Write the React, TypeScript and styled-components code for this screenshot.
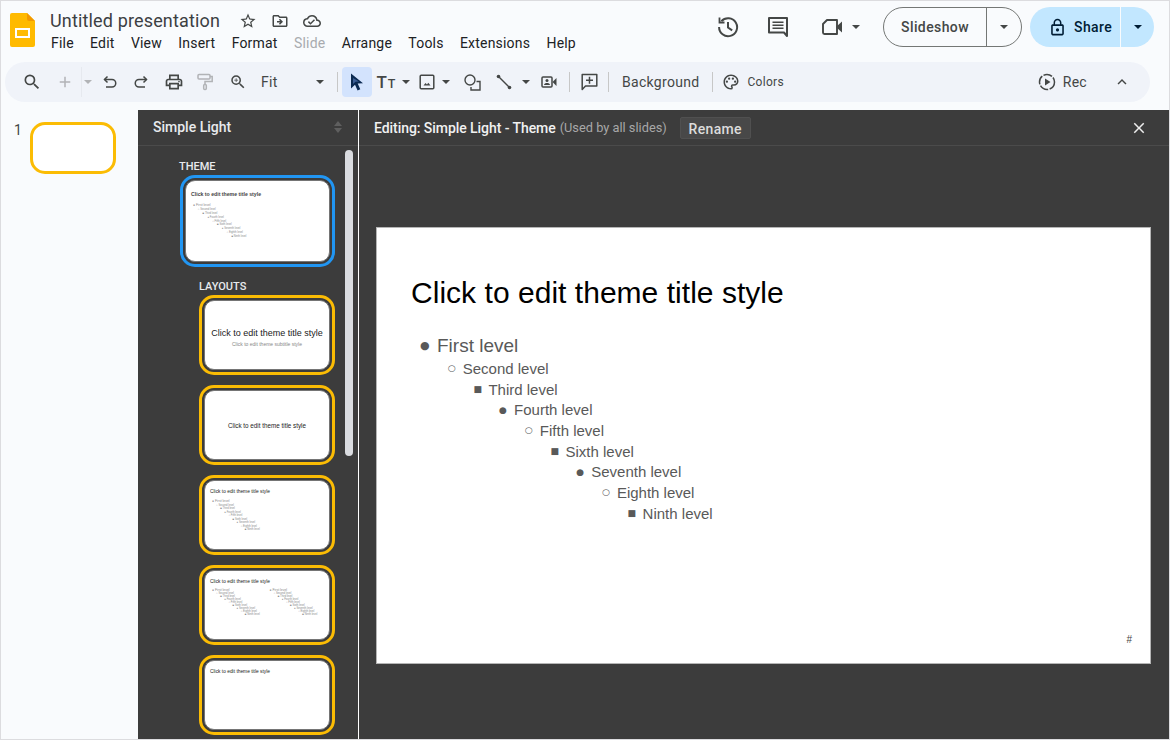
import React from 'react';
import styled, { createGlobalStyle } from 'styled-components';
import {
  MdOutlineStarBorder, MdOutlineDriveFileMove, MdOutlineCloudDone, MdSearch, MdAdd,
  MdOutlinePrint, MdOutlineZoomIn, MdOutlinePalette, MdLockOutline, MdExpandLess, MdClose,
} from 'react-icons/md';

const GlobalStyle = createGlobalStyle`
  * { box-sizing: border-box; }
  html, body { margin: 0; padding: 0; background: #f9fbfd; overflow: hidden; }
  body { font-family: Roboto, "Liberation Sans", sans-serif; }
`;

const Page = styled.div`
  width: 1170px;
  height: 740px;
  border: 1px solid #dcdcdf;
  background: #f9fbfd;
  display: flex;
  flex-direction: column;
  overflow: hidden;
`;

const Header = styled.header`
  height: 61px;
  flex: none;
  display: flex;
  justify-content: space-between;
  padding: 6px 15px 0 9px;
`;

const TitleBlock = styled.div`
  display: flex;
  gap: 15px;
  padding-top: 6px;
`;

const Names = styled.div`
  display: flex;
  flex-direction: column;
`;

const TitleRow = styled.div`
  display: flex;
  align-items: center;
  height: 25px;
  margin-top: -5px;
  color: #444746;
`;

const DocTitle = styled.span`
  font-size: 18px;
  width: 182px;
  letter-spacing: 0.15px;
  color: #3c4043;
`;

const TitleIcon = styled.span`
  width: 32px;
  display: flex;
  justify-content: center;
  font-size: 18px;
  color: #444746;
`;

const Menu = styled.nav`
  display: flex;
  margin-top: 1px;
  padding-left: 1px;
  gap: 16.3px;
  font-size: 14px;
  line-height: 18px;
  letter-spacing: 0.2px;
`;

const MenuItem = styled.span<{ $disabled?: boolean }>`
  color: ${(p) => (p.$disabled ? '#a8abaf' : '#202124')};
`;

const Actions = styled.div`
  display: flex;
  align-items: center;
  height: 40px;
`;

const ActionIcon = styled.span<{ $w: number; $ml?: number }>`
  width: ${(p) => p.$w}px;
  margin-left: ${(p) => p.$ml ?? 0}px;
  display: flex;
  justify-content: center;
`;

const Caret = styled.span<{ $color?: string; $w?: number }>`
  width: ${(p) => p.$w ?? 12}px;
  flex: none;
  display: flex;
  justify-content: center;
  &::after {
    content: '';
    border-left: 4px solid transparent;
    border-right: 4px solid transparent;
    border-top: 4px solid ${(p) => p.$color ?? '#444746'};
  }
`;

const SplitButton = styled.div<{ $w: number; $share?: boolean }>`
  width: ${(p) => p.$w}px;
  height: 40px;
  margin-left: ${(p) => (p.$share ? 8 : 22)}px;
  border-radius: 20px;
  border: ${(p) => (p.$share ? 'none' : '1px solid #747775')};
  background: ${(p) => (p.$share ? '#c2e7ff' : 'transparent')};
  display: flex;
  align-items: center;
  font-size: 14px;
  font-weight: 500;
  letter-spacing: 0.4px;
  color: ${(p) => (p.$share ? '#001d35' : '#444746')};
`;

const SplitMain = styled.span<{ $w: number; $share?: boolean }>`
  width: ${(p) => p.$w}px;
  height: 100%;
  display: flex;
  align-items: center;
  justify-content: ${(p) => (p.$share ? 'flex-start' : 'center')};
  padding-left: ${(p) => (p.$share ? 18 : 0)}px;
  gap: 7px;
  border-right: 1px solid ${(p) => (p.$share ? '#f9fbfd' : '#747775')};
  svg { font-size: 19px; }
`;

const Toolbar = styled.div`
  height: 40px;
  flex: none;
  margin: 0 19px 0 4px;
  padding-left: 11px;
  border-radius: 20px;
  background: #f0f3f9;
  display: flex;
  align-items: center;
  color: #444746;
`;

const Tool = styled.span<{ $w: number; $muted?: boolean; $size?: number }>`
  width: ${(p) => p.$w}px;
  height: 30px;
  flex: none;
  display: flex;
  align-items: center;
  justify-content: center;
  font-size: ${(p) => p.$size ?? 18}px;
  color: ${(p) => (p.$muted ? '#b1b3b6' : '#444746')};
`;

const ActiveTool = styled(Tool)`
  background: #d3e3fd;
  border-radius: 4px;
`;

const ZoomSelect = styled.span`
  width: 74px;
  display: flex;
  align-items: center;
  justify-content: space-between;
  padding: 0 4px 0 3px;
  font-size: 14px;
  letter-spacing: 0.3px;
`;

const TextGlyph = styled.span`
  font-size: 17px;
  font-weight: 500;
  small { font-size: 12.5px; font-weight: 500; margin-left: 1px; }
`;

const Divider = styled.span<{ $l: number; $r: number; $faint?: boolean }>`
  width: 1px;
  height: ${(p) => (p.$faint ? 30 : 20)}px;
  flex: none;
  background: ${(p) => (p.$faint ? '#e6e9ef' : '#c7c7c7')};
  margin: 0 ${(p) => p.$r}px 0 ${(p) => p.$l}px;
`;

const ToolText = styled.span<{ $size?: number; $ml?: number; $mr?: number }>`
  font-size: ${(p) => p.$size ?? 14}px;
  margin: 0 ${(p) => p.$mr ?? 0}px 0 ${(p) => p.$ml ?? 0}px;
  letter-spacing: 0.3px;
  color: #444746;
`;

const ToolRight = styled.div`
  margin-left: auto;
  display: flex;
  align-items: center;
`;

const Workspace = styled.div`
  flex: 1;
  min-height: 0;
  margin-top: 8px;
  display: flex;
`;

const Filmstrip = styled.aside`
  width: 137px;
  flex: none;
  display: flex;
  gap: 8px;
  padding: 12px 0 0 13px;
  font-size: 14px;
  color: #444746;
`;

const FilmThumb = styled.div`
  width: 86px;
  height: 52px;
  background: #fff;
  border: 3px solid #fbbc04;
  border-radius: 15px;
`;

const ThemePanel = styled.section`
  width: 221px;
  flex: none;
  position: relative;
  background: #3c3c3c;
  border-right: 1px solid #fff;
  overflow: hidden;
  display: flex;
  flex-direction: column;
`;

const PanelHead = styled.div`
  height: 36px;
  flex: none;
  padding: 0 14px 2px 15px;
  display: flex;
  align-items: center;
  justify-content: space-between;
  border-bottom: 1px solid #4b4b4b;
  font-size: 14px;
  font-weight: 500;
  color: #e8eaed;
`;

const SortArrows = styled.span`
  display: flex;
  flex-direction: column;
  gap: 2px;
  margin-right: 2px;
  &::before, &::after {
    content: '';
    border-left: 4px solid transparent;
    border-right: 4px solid transparent;
  }
  &::before { border-bottom: 5px solid #5f5f5f; }
  &::after { border-top: 5px solid #5f5f5f; }
`;

const ThumbList = styled.div`
  padding: 14px 23px 0 0;
  display: flex;
  flex-direction: column;
  align-items: flex-end;
`;

const SectionLabel = styled.div<{ $w: number }>`
  width: ${(p) => p.$w}px;
  height: 15px;
  font-size: 11px;
  line-height: 14px;
  font-weight: 500;
  color: #e8eaed;
`;

const Thumb = styled.div<{ $w: number; $h: number; $selected?: boolean }>`
  width: ${(p) => p.$w}px;
  height: ${(p) => p.$h}px;
  flex: none;
  margin-bottom: ${(p) => (p.$selected ? 13 : 10)}px;
  border: 3px solid ${(p) => (p.$selected ? '#2196f3' : '#fbbc04')};
  border-radius: 15px;
  padding: 2px;
`;

const ThumbInner = styled.div<{ $center?: boolean; $top?: number }>`
  height: 100%;
  background: #fff;
  border: 1.5px solid #757575;
  border-radius: 10px;
  padding: ${(p) => (p.$center ? '2px 0 0' : `${p.$top ?? 8}px 4px 0 5px`)};
  display: flex;
  flex-direction: column;
  align-items: ${(p) => (p.$center ? 'center' : 'stretch')};
  justify-content: ${(p) => (p.$center ? 'center' : 'flex-start')};
  font-family: "Liberation Sans", Arial, sans-serif;
  overflow: hidden;
  white-space: nowrap;
`;

const MiniTitle = styled.div<{ $size: number; $bold?: boolean }>`
  font-size: ${(p) => p.$size}px;
  line-height: ${(p) => Math.ceil(p.$size + 1)}px;
  color: ${(p) => (p.$bold ? '#444' : '#222')};
  font-weight: ${(p) => (p.$bold ? 700 : 400)};
`;

const MiniSub = styled.div`
  font-size: 5px;
  line-height: 6px;
  margin: 3px 0 -3px;
  color: #888;
`;

const MiniColumns = styled.div<{ $gap: number }>`
  display: flex;
  margin-top: ${(p) => p.$gap}px;
`;

const MiniCol = styled.div`
  width: 63px;
`;

const MiniRow = styled.div<{ $indent: number; $first?: boolean; $h: number }>`
  height: ${(p) => (p.$first ? p.$h + 1 : p.$h)}px;
  padding-left: ${(p) => p.$indent}px;
  font-size: ${(p) => (p.$first ? 3.4 : 2.7)}px;
  line-height: ${(p) => (p.$first ? p.$h + 1 : p.$h)}px;
  color: #888;
`;

const Scrollbar = styled.div`
  position: absolute;
  left: 207px;
  top: 40px;
  width: 8px;
  height: 306px;
  border-radius: 4px;
  background: #dadce0;
`;

const Editor = styled.main`
  flex: 1;
  min-width: 0;
  background: #3c3c3c;
  display: flex;
  flex-direction: column;
`;

const EditorHead = styled.div`
  height: 36px;
  flex: none;
  padding: 0 21px 0 15px;
  display: flex;
  align-items: center;
  border-bottom: 1px solid #4b4b4b;
`;

const EditingText = styled.span`
  font-size: 14px;
  font-weight: 500;
  letter-spacing: -0.06px;
  color: #f1f1f1;
`;

const UsedBy = styled.span`
  margin-left: 4px;
  font-size: 12.8px;
  color: #a8a8a8;
`;

const RenameButton = styled.span`
  width: 71px;
  height: 22px;
  margin-left: 13px;
  padding-top: 2px;
  background: #484848;
  border: 1px solid #505050;
  border-radius: 2px;
  display: flex;
  align-items: center;
  justify-content: center;
  font-size: 14px;
  font-weight: 500;
  letter-spacing: 0.35px;
  color: #dcdcdc;
`;

const CloseButton = styled.span`
  margin-left: auto;
  display: flex;
  font-size: 18px;
  color: #eee;
`;

const Slide = styled.div`
  width: 775px;
  height: 437px;
  margin: 81px 0 0 17px;
  background: #fff;
  border: 1px solid #b5b5b5;
  padding: 47px 18px 18px 34px;
  display: flex;
  flex-direction: column;
  font-family: "Liberation Sans", Arial, sans-serif;
`;

const SlideTitle = styled.h1`
  margin: 0 0 22px;
  font-size: 30px;
  line-height: 36px;
  font-weight: 400;
  letter-spacing: 0.03px;
  color: #000;
`;

const Level = styled.div<{ $indent: number; $first?: boolean }>`
  display: flex;
  padding-left: ${(p) => p.$indent}px;
  height: ${(p) => (p.$first ? 25 : 20.7)}px;
  align-items: center;
  font-size: ${(p) => (p.$first ? 19 : 15)}px;
  color: #595959;
`;

const Bullet = styled.span<{ $first?: boolean }>`
  width: 17px;
  flex: none;
  padding-left: ${(p) => (p.$first ? 0 : 2)}px;
  font-size: ${(p) => (p.$first ? 11 : 9)}px;
  font-family: "DejaVu Sans", sans-serif;
`;

const SlideNumber = styled.div`
  margin-top: auto;
  align-self: flex-end;
  font-size: 10px;
  color: #444;
`;

const levels = ['First', 'Second', 'Third', 'Fourth', 'Fifth', 'Sixth', 'Seventh', 'Eighth', 'Ninth'];
const marks = ['●', '○', '■'];

const Logo = () => (
  <svg width="25" height="34" viewBox="0 0 25 34">
    <path d="M2 0h15l8 8v24a2 2 0 0 1-2 2H2a2 2 0 0 1-2-2V2a2 2 0 0 1 2-2z" fill="#ffba00" />
    <path d="M17 0l8 8h-6a2 2 0 0 1-2-2z" fill="#f29900" />
    <rect x="6" y="16" width="13" height="8" fill="none" stroke="#fff" strokeWidth="2" />
  </svg>
);

const HistoryIcon = () => (
  <svg width="22" height="22" viewBox="0 0 22 22" fill="none" stroke="#444746" strokeWidth="2">
    <path d="M4.4 5.2A9 9 0 1 1 2.1 11" />
    <path d="M2.5 1.5v5h5" strokeWidth="1.8" />
    <path d="M11 6v5.5l4.2 2.8" />
  </svg>
);

const CommentIcon = () => (
  <svg width="22" height="22" viewBox="0 0 22 22" fill="none" stroke="#444746" strokeWidth="2">
    <path d="M2 2h18v18l-3-3.5H2z" strokeLinejoin="round" />
    <path d="M5.5 6.2h11M5.5 9.2h11M5.5 12.2h11" strokeWidth="1.5" />
  </svg>
);

const CameraIcon = () => (
  <svg width="22" height="20" viewBox="0 0 22 20">
    <path d="M6 3h10v14H3.5A1.5 1.5 0 0 1 2 15.5V7z" fill="none" stroke="#444746" strokeWidth="1.9" strokeLinejoin="round" />
    <path d="M15 10l6-5.5v11z" fill="#444746" />
  </svg>
);

const UndoIcon = ({ flip }: { flip?: boolean }) => (
  <svg width="16" height="16" viewBox="0 0 16 16" fill="none" stroke="#444746" strokeWidth="1.5" transform={flip ? 'scale(-1 1)' : undefined}>
    <path d="M5.5 2.5L2.5 5.5l3 3" />
    <path d="M2.5 5.5H10a3.5 3.5 0 0 1 0 7.5H4" />
  </svg>
);

const RollerIcon = () => (
  <svg width="18" height="18" viewBox="0 0 18 18" fill="none" stroke="#b1b3b6" strokeWidth="1.5">
    <rect x="2" y="1.5" width="12" height="4.5" rx="1" />
    <path d="M14 3.5h2.2v5H9v3" />
    <rect x="7.700" y="11.500" width="2.600" height="5" rx="1" />
  </svg>
);

const CursorIcon = () => (
  <svg width="18" height="20" viewBox="0 0 18 20">
    <path d="M3 1.5v15l4-3.700 2.600 5.700 2.700-1.300-2.600-5.600 5.300-.4z" fill="#0b2a52" />
    <path d="M5 6v6l2.500-2.300L11 9.500z" fill="#3d5f96" />
  </svg>
);

const ImageIcon = () => (
  <svg width="16" height="16" viewBox="0 0 16 16">
    <rect x="1.2" y="1.2" width="13.6" height="13.6" rx="1" fill="none" stroke="#444746" strokeWidth="1.5" />
    <path d="M4.500 11.500l2-2.600 1.500 1.500 1.300-1.600 2.200 2.700z" fill="#444746" />
  </svg>
);

const ShapeIcon = () => (
  <svg width="17" height="17" viewBox="0 0 17 17" fill="none" stroke="#444746" strokeWidth="1.4">
    <circle cx="6" cy="6" r="5" />
    <path d="M12.500 7.500h3.500v8.500H7v-3" />
  </svg>
);

const LineIcon = () => (
  <svg width="16" height="16" viewBox="0 0 16 16" fill="#444746">
    <circle cx="2.5" cy="2.5" r="1.8" />
    <circle cx="13.5" cy="13.5" r="1.8" />
    <path d="M2 3l1-1 11 11-1 1z" />
  </svg>
);

const VideoBoxIcon = () => (
  <svg width="16" height="14" viewBox="0 0 16 14">
    <rect x="1" y="2" width="10" height="10" rx="1" fill="none" stroke="#444746" strokeWidth="1.5" />
    <circle cx="6" cy="5.6" r="1.5" fill="#444746" />
    <path d="M3 10c.3-1.600 1.500-2 3-2s2.700.4 3 2z" fill="#444746" />
    <path d="M11.500 7L15.500 3v8z" fill="#444746" />
  </svg>
);

const AddCommentIcon = () => (
  <svg width="17" height="18" viewBox="0 0 17 18" fill="none" stroke="#444746" strokeWidth="1.5">
    <path d="M1.200 1.500h14.600v11.500H4.500l-3.300 3.500z" strokeLinejoin="round" />
    <path d="M8.500 3.800v7M5 7.300h7" />
  </svg>
);

const RecIcon = () => (
  <svg width="18" height="18" viewBox="0 0 18 18" fill="none">
    <circle cx="9" cy="9" r="7.5" stroke="#444746" strokeWidth="1.5" strokeDasharray="9 1.5" />
    <path d="M7 5.500L12.500 9 7 12.500z" fill="#444746" />
  </svg>
);

const MiniLevels = ({ base, step, rowH }: { base: number; step: number; rowH: number }) => (
  <>
    {levels.map((name, i) => (
      <MiniRow key={name} $indent={base + i * step} $first={i === 0} $h={rowH}>
        {marks[i % 3]} {name} level
      </MiniRow>
    ))}
  </>
);

export default function App() {
  return (
    <>
      <GlobalStyle />
      <Page>
        <Header>
          <TitleBlock>
            <Logo />
            <Names>
              <TitleRow>
                <DocTitle>Untitled presentation</DocTitle>
                <TitleIcon><MdOutlineStarBorder /></TitleIcon>
                <TitleIcon><MdOutlineDriveFileMove /></TitleIcon>
                <TitleIcon><MdOutlineCloudDone /></TitleIcon>
              </TitleRow>
              <Menu>
                <MenuItem>File</MenuItem>
                <MenuItem>Edit</MenuItem>
                <MenuItem>View</MenuItem>
                <MenuItem>Insert</MenuItem>
                <MenuItem>Format</MenuItem>
                <MenuItem $disabled>Slide</MenuItem>
                <MenuItem>Arrange</MenuItem>
                <MenuItem>Tools</MenuItem>
                <MenuItem>Extensions</MenuItem>
                <MenuItem>Help</MenuItem>
              </Menu>
            </Names>
          </TitleBlock>
          <Actions>
            <ActionIcon $w={40}><HistoryIcon /></ActionIcon>
            <ActionIcon $w={60}><CommentIcon /></ActionIcon>
            <ActionIcon $w={38} $ml={5}><CameraIcon /></ActionIcon>
            <Caret $w={10} />
            <SplitButton $w={139}>
              <SplitMain $w={103}>Slideshow</SplitMain>
              <Caret $w={34} />
            </SplitButton>
            <SplitButton $w={124} $share>
              <SplitMain $w={91} $share><MdLockOutline />Share</SplitMain>
              <Caret $w={33} $color="#001d35" />
            </SplitButton>
          </Actions>
        </Header>

        <Toolbar>
          <Tool $w={32} $size={20}><MdSearch /></Tool>
          <Tool $w={33} $muted><MdAdd /></Tool>
          <Divider $l={0} $r={0} $faint />
          <Caret $w={12} $color="#b1b3b6" />
          <Tool $w={32}><UndoIcon /></Tool>
          <Tool $w={30}><UndoIcon flip /></Tool>
          <Tool $w={36} $size={20}><MdOutlinePrint /></Tool>
          <Tool $w={26}><RollerIcon /></Tool>
          <Tool $w={40}><MdOutlineZoomIn /></Tool>
          <ZoomSelect>Fit<Caret $w={16} /></ZoomSelect>
          <Divider $l={5} $r={4} />
          <ActiveTool $w={30}><CursorIcon /></ActiveTool>
          <Tool $w={28}><TextGlyph>T<small>T</small></TextGlyph></Tool>
          <Caret $w={12} />
          <Tool $w={29}><ImageIcon /></Tool>
          <Caret $w={10} />
          <Tool $w={42}><ShapeIcon /></Tool>
          <Tool $w={21}><LineIcon /></Tool>
          <Caret $w={24} />
          <Tool $w={22}><VideoBoxIcon /></Tool>
          <Divider $l={9} $r={4} />
          <Tool $w={30}><AddCommentIcon /></Tool>
          <Divider $l={4} $r={13} />
          <ToolText>Background</ToolText>
          <Divider $l={13} $r={7} />
          <Tool $w={22}><MdOutlinePalette /></Tool>
          <ToolText $size={12} $ml={5}>Colors</ToolText>
          <ToolRight>
            <Tool $w={24}><RecIcon /></Tool>
            <ToolText $ml={4} $mr={7}>Rec</ToolText>
            <Tool $w={56}><MdExpandLess /></Tool>
          </ToolRight>
        </Toolbar>

        <Workspace>
          <Filmstrip>
            <span>1</span>
            <FilmThumb />
          </Filmstrip>

          <ThemePanel>
            <PanelHead>
              Simple Light
              <SortArrows />
            </PanelHead>
            <ThumbList>
              <SectionLabel $w={156}>THEME</SectionLabel>
              <Thumb $w={155} $h={92} $selected>
                <ThumbInner $top={10}>
                  <MiniTitle $size={5.2} $bold>Click to edit theme title style</MiniTitle>
                  <MiniColumns $gap={5}><MiniCol><MiniLevels base={2} step={4.8} rowH={3.9} /></MiniCol></MiniColumns>
                </ThumbInner>
              </Thumb>
              <SectionLabel $w={136}>LAYOUTS</SectionLabel>
              <Thumb $w={136} $h={80}>
                <ThumbInner $center>
                  <MiniTitle $size={9}>Click to edit theme title style</MiniTitle>
                  <MiniSub>Click to edit theme subtitle style</MiniSub>
                </ThumbInner>
              </Thumb>
              <Thumb $w={136} $h={80}>
                <ThumbInner $center>
                  <MiniTitle $size={6.3}>Click to edit theme title style</MiniTitle>
                </ThumbInner>
              </Thumb>
              <Thumb $w={136} $h={80}>
                <ThumbInner>
                  <MiniTitle $size={4.85}>Click to edit theme title style</MiniTitle>
                  <MiniColumns $gap={4}><MiniCol><MiniLevels base={2} step={4.1} rowH={3.5} /></MiniCol></MiniColumns>
                </ThumbInner>
              </Thumb>
              <Thumb $w={136} $h={80}>
                <ThumbInner>
                  <MiniTitle $size={4.85}>Click to edit theme title style</MiniTitle>
                  <MiniColumns $gap={3}>
                    <MiniCol><MiniLevels base={2} step={4.1} rowH={3} /></MiniCol>
                    <MiniCol><MiniLevels base={2} step={4.1} rowH={3} /></MiniCol>
                  </MiniColumns>
                </ThumbInner>
              </Thumb>
              <Thumb $w={136} $h={80}>
                <ThumbInner>
                  <MiniTitle $size={4.85}>Click to edit theme title style</MiniTitle>
                </ThumbInner>
              </Thumb>
            </ThumbList>
            <Scrollbar />
          </ThemePanel>

          <Editor>
            <EditorHead>
              <EditingText>Editing: Simple Light - Theme</EditingText>
              <UsedBy>(Used by all slides)</UsedBy>
              <RenameButton>Rename</RenameButton>
              <CloseButton><MdClose /></CloseButton>
            </EditorHead>
            <Slide>
              <SlideTitle>Click to edit theme title style</SlideTitle>
              {levels.map((name, i) => (
                <Level key={name} $indent={9 + i * 25.7} $first={i === 0}>
                  <Bullet $first={i === 0}>{marks[i % 3]}</Bullet>
                  {name} level
                </Level>
              ))}
              <SlideNumber>#</SlideNumber>
            </Slide>
          </Editor>
        </Workspace>
      </Page>
    </>
  );
}
